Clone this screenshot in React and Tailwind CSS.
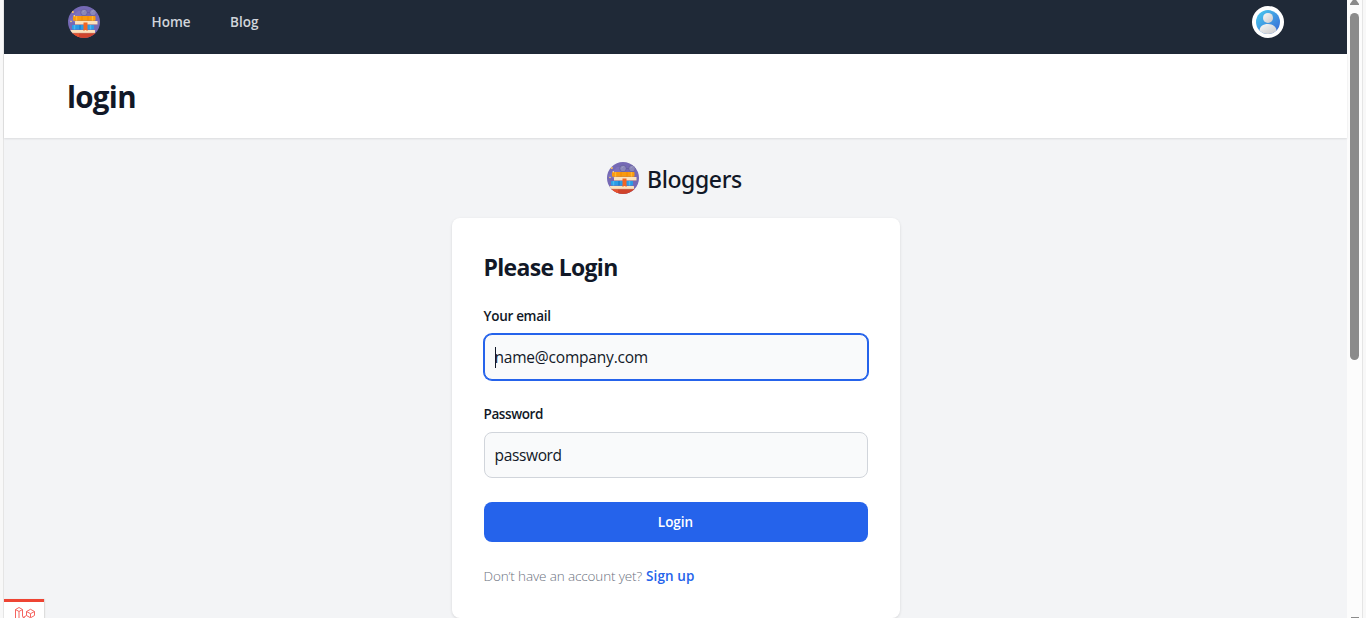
function BooksLogo() {
  return (
    <svg viewBox="0 0 32 32" className="block size-8 shrink-0" aria-hidden="true">
      <defs>
        <clipPath id="disc"><circle cx="16" cy="16" r="16" /></clipPath>
      </defs>
      <g clipPath="url(#disc)">
        <rect width="32" height="32" fill="#7569b5" />
        <path d="M0 15 10 5l8 0-8 12z" fill="#7d72bd" />
        <rect y="27" width="32" height="5" fill="#d0432b" />
        <rect y="27" width="11" height="5" fill="#e6522f" />
        <circle cx="16" cy="6.5" r="3.3" fill="#8b87b8" stroke="#625b9c" strokeWidth=".7" />
        <circle cx="25" cy="6.500" r="3.3" fill="#8b87b8" stroke="#625b9c" strokeWidth=".7" />
        <path d="M19.300 6.500h2.400" stroke="#625b9c" strokeWidth=".7" />
        <path d="M14.500 6 16.500 4.500M23.500 6 25.500 4.500" stroke="#a5a2ca" strokeWidth=".8" />
        <rect x="5" y="10" width="22.500" height="4.800" rx=".8" fill="#f99a0e" />
        <path d="M8.500 10v4.800M24.500 10v4.800" stroke="#ffb52f" strokeWidth="1.400" />
        <path d="M14 10v4.800M20 10v4.800" stroke="#f28705" />
        <rect x="7" y="15" width="22.500" height="3.600" rx=".4" fill="#fbe2bd" />
        <path d="M7 18.600h22" stroke="#ba8e8d" strokeWidth=".5" />
        <rect x="4" y="19" width="22" height="4.500" rx=".8" fill="#2b9be5" />
        <path d="M6.500 19v4.500M22.500 19v4.500" stroke="#48b8f0" strokeWidth="1.500" />
        <path d="M12 19v4.500" stroke="#176fbe" />
        <rect x="2.500" y="24" width="24.500" height="3.200" rx=".4" fill="#fbe2bd" />
        <path d="M2.500 27.300H27" stroke="#a94336" strokeWidth=".5" />
        <path d="M15.500 16.500h4V25l-2-1.300-2 1.300z" fill="#f26522" />
        <circle cx="4.800" cy="6" r="1.100" fill="#ffc45d" />
        <circle cx="6.300" cy="9.800" r=".7" fill="#ffe3a1" />
        <circle cx="3" cy="15.500" r=".8" fill="#ffd46b" />
      </g>
    </svg>
  );
}

function Avatar() {
  return (
    <svg viewBox="0 0 32 32" className="block size-8" aria-hidden="true">
      <defs>
        <linearGradient id="sky" x1="0" y1="0" x2="1" y2="1">
          <stop offset="0" stopColor="#48cdf0" />
          <stop offset="1" stopColor="#3a66d4" />
        </linearGradient>
        <linearGradient id="person" x1="0" y1="0" x2="1" y2="1">
          <stop offset="0" stopColor="#f8f8f8" />
          <stop offset="1" stopColor="#c9c9cb" />
        </linearGradient>
        <clipPath id="face"><circle cx="16" cy="16" r="12" /></clipPath>
      </defs>
      <circle cx="16" cy="16" r="16" fill="#fff" />
      <circle cx="16" cy="16" r="12" fill="url(#sky)" />
      <g clipPath="url(#face)" fill="url(#person)">
        <circle cx="16" cy="11.9" r="5" />
        <path d="M7.5 28v-3c0-4.500 3.500-7 8.500-7s8.500 2.500 8.500 7v3z" />
      </g>
    </svg>
  );
}

function DebugTab() {
  return (
    <div className="absolute bottom-0 left-0 h-[19px] w-10 overflow-hidden border-t-[3px] border-[#ee4433] bg-white shadow-[1px_0_1px_#ddd]">
      <svg viewBox="0 0 20 16" className="ml-[11px] mt-[5px] h-4 w-5" fill="none" stroke="#f4645f" strokeWidth="1" strokeLinejoin="round">
        <path d="M.5 2.500 4 .5l3.500 2V9.500l3 2M.5 2.500V13M.5 2.500 4 4.500l3.500-2M4 4.500V13M11.500 4.500l4-2.200 4 2.200v4l-4 2.300-4-2.300zM11.500 4.500l4 2.200 4-2.200M15.500 6.700v4M11.500 8.500 7.500 11" />
      </svg>
    </div>
  );
}

function Scrollbar() {
  return (
    <div className="flex w-[15px] shrink-0 flex-col items-center bg-[#fcfcfc]">
      <svg viewBox="0 0 9 5" className="block h-[5px] w-[9px] shrink-0" fill="#8b8b8b">
        <path d="M2.800 0h3.400L9 4v1H0V4z" />
      </svg>
      <div className="mt-2 h-[347px] w-[9px] shrink-0 rounded-full bg-[#8b8b8b]" />
      <div className="mt-auto h-px w-2 bg-[#8b8b8b]" />
    </div>
  );
}

export default function App() {
  return (
    <div className="flex h-[618px] w-[1366px] overflow-hidden bg-[#f8f8f8] font-['Open_Sans','Noto_Sans',sans-serif] text-[#111827]">
      <div className="w-1 shrink-0 border-r border-[#e5e5e5]" />
      <div className="relative flex w-[1343px] shrink-0 flex-col bg-[#f3f4f6]">
        <nav className="flex h-[54px] shrink-0 items-start justify-between bg-[#1f2937] pl-16 pr-[63px] pt-1.5">
          <div className="flex h-8 items-center text-[13.5px] font-semibold leading-5 text-[#d1d5db]">
            <BooksLogo />
            <a className="ml-[51.5px] w-[78.5px]">Home</a>
            <a>Blog</a>
          </div>
          <Avatar />
        </nav>
        <header className="z-10 flex h-[84px] shrink-0 items-center bg-white pl-[63px] pt-0.5 shadow-[0_1px_2px_rgba(0,0,0,0.1)]">
          <h1 className="text-[29.5px] font-bold leading-9 tracking-[-0.7px]">login</h1>
        </header>
        <main className="flex flex-col items-center pt-6">
          <div className="mb-6 flex h-8 items-center">
            <BooksLogo />
            <span className="ml-2 mt-0.5 w-[97px] whitespace-nowrap font-['Noto_Sans','Open_Sans',sans-serif] text-[23px] font-medium leading-8 tracking-[-0.4px]">Bloggers</span>
          </div>
          <section className="flex h-[400px] w-[448px] flex-col rounded-lg bg-white p-8 shadow-[0_1px_3px_rgba(0,0,0,0.12)]">
            <h2 className="pt-0.5 text-[23px] font-bold leading-[30px] tracking-[-0.68px]">Please Login</h2>
            <form className="mt-6 flex flex-col">
              <label className="mb-2 text-[13.5px] font-semibold leading-5 tracking-[-0.3px]">Your email</label>
              <div className="flex h-[46px] items-center rounded-lg border border-[#2563eb] bg-[#f9fafb] px-2.5 text-[15.5px] ring-1 ring-[#2563eb]">
                <span className="-mr-px h-[21px] w-px bg-[#111827]" />
                <span className="pt-0.5 tracking-[-0.2px]">name@company.com</span>
              </div>
              <label className="mb-2 mt-6 text-[13.5px] font-semibold leading-5 tracking-[-0.4px]">Password</label>
              <div className="flex h-[46px] items-center rounded-lg border border-[#d1d5db] bg-[#f9fafb] px-2.5 text-[15.5px]">
                <span className="pt-0.5 tracking-[-0.35px]">password</span>
              </div>
              <button type="button" className="mt-6 h-10 rounded-lg bg-[#2563eb] text-[13.5px] font-semibold text-white">Login</button>
              <p className="mt-6 flex text-[13.5px] font-light leading-5 text-[#6b7280]">
                <span className="w-[162.5px] whitespace-nowrap tracking-[-0.13px]">Don’t have an account yet?</span>
                <a className="font-semibold tracking-[0.1px] text-[#2563eb]">Sign up</a>
              </p>
            </form>
          </section>
        </main>
        <DebugTab />
      </div>
      <Scrollbar />
      <div className="flex-1 border-l border-[#e5e5e5] bg-[#f8f8f8]" />
    </div>
  );
}
